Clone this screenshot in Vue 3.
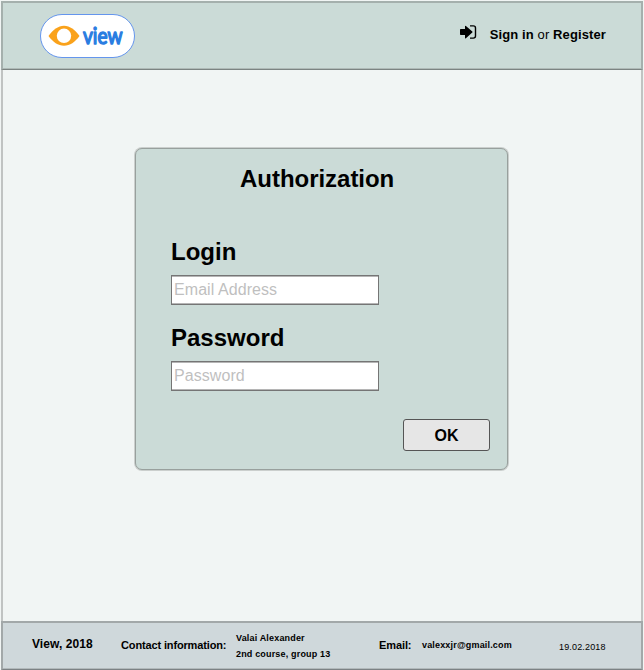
<script setup>
import { ref } from 'vue'

const login = ref('')
const password = ref('')
</script>

<template>
  <div class="page">
    <header class="header">
      <svg class="logo" width="96" height="44" viewBox="0 0 96 44">
        <rect x="0.5" y="0.5" width="94" height="43" rx="21.5" fill="#fff" stroke="#6495ed" />
        <path d="M8.5 22C13 16 18 11.8 24 11.8S35 16 39.5 22C35 28 30 31.8 24 31.8S13 28 8.5 22Z" fill="#faa21b" />
        <circle cx="24" cy="21.8" r="7.2" fill="#fff" />
        <text x="43" y="30.4" textLength="39.5" lengthAdjust="spacingAndGlyphs" class="brand">view</text>
      </svg>
      <div class="account">
        <svg class="enter" width="17" height="15" viewBox="0 0 17 15">
          <path d="M0 4.7Q0 4 .7 4H5V1.4Q5 .2 5.9 1L12.3 6.5Q12.8 7 12.3 7.5L5.9 13.2Q5 13.8 5 12.7V10H.7Q0 10 0 9.3Z" fill="#000" />
          <path d="M10 .9H13.3Q15.5 .9 15.5 3V11Q15.5 13.1 13.3 13.1H10" fill="none" stroke="#000" stroke-width="1.4" />
        </svg>
        <span class="links"><b>Sign in</b> or <b>Register</b></span>
      </div>
    </header>

    <main class="main">
      <form class="card" @submit.prevent>
        <h1>Authorization</h1>
        <label for="login">Login</label>
        <input id="login" v-model="login" type="text" placeholder="Email Address" />
        <label for="password">Password</label>
        <input id="password" v-model="password" type="password" placeholder="Password" />
        <button type="submit">OK</button>
      </form>
    </main>

    <footer class="footer">
      <span class="copy">View, 2018</span>
      <span class="contact">Contact information:</span>
      <div class="author"><span>Valai Alexander</span><span>2nd course, group 13</span></div>
      <span class="email">Email:</span>
      <span class="address">valexxjr@gmail.com</span>
      <span class="date">19.02.2018</span>
    </footer>
  </div>
</template>

<style>
body {
  background: #f1f5f4;
}
</style>

<style scoped>
* {
  box-sizing: border-box;
}
.page {
  width: 644px;
  height: 670px;
  padding: 1px 1px 0;
  display: flex;
  flex-direction: column;
  font-family: "Liberation Sans", Arial, sans-serif;
  color: #000;
  background: #f1f5f4;
}
.header {
  height: 69px;
  flex: none;
  display: flex;
  justify-content: space-between;
  align-items: flex-start;
  padding: 11px 35px 0 37px;
  background: #cbdbd7;
  border: 2px solid #a5b0ad;
  border-bottom: 1px solid #7c8482;
  box-shadow: inset 0 -1px #afbab7;
}
.logo {
  display: block;
}
.brand {
  font: 400 23.5px Lato, sans-serif;
  fill: #2a7de1;
  stroke: #2a7de1;
  stroke-width: 1.5;
  stroke-linejoin: round;
  stroke-linecap: round;
}
.account {
  display: flex;
  padding-top: 11px;
}
.enter {
  margin-right: 13px;
}
.links {
  padding-top: 2px;
  font-size: 13px;
  line-height: 15px;
  letter-spacing: 0.11px;
  white-space: nowrap;
}
.main {
  flex: 1;
  padding: 78px 0 0 132px;
  border-left: 2px solid #c0c3c2;
  border-right: 2px solid #c0c3c2;
}
.card {
  width: 373px;
  height: 322px;
  display: flex;
  flex-direction: column;
  align-items: flex-start;
  padding: 16px 17px 0 35px;
  background: #cbdbd7;
  border: 1px solid #98a09d;
  border-radius: 7px;
  box-shadow: 0 0 0 1px #cbcfcd;
}
h1 {
  margin: 0 0 46px 69px;
  font-size: 24px;
  line-height: 27px;
  letter-spacing: -0.03px;
}
label {
  font-size: 24px;
  font-weight: bold;
  line-height: 27px;
  margin-bottom: 10px;
}
input {
  width: 208px;
  height: 30px;
  margin: 0 0 19px;
  padding: 0 2px;
  border: 1px solid #757575;
  border-radius: 0;
  background: #fff;
  box-shadow: inset 0 1px #b5b5b5, inset 0 -1px #b5b5b5;
  font: 16px "Liberation Sans", Arial, sans-serif;
  letter-spacing: 0.07px;
}
input::placeholder {
  color: #bfbfbf;
  opacity: 1;
}
button {
  align-self: flex-end;
  width: 87px;
  height: 32px;
  margin-top: 9px;
  padding: 1px 0 0;
  border: 1px solid #555;
  border-radius: 3px;
  background: #e6e6e6;
  color: #000;
  font: bold 16px "Liberation Sans", Arial, sans-serif;
}
.footer {
  flex: none;
  height: 49px;
  display: flex;
  align-items: flex-start;
  background: #cfd8db;
  border: 2px solid #a2a8a9;
  border-bottom: 1px solid #7c8284;
  box-shadow: inset 0 -1px #b2b9bb;
  font-weight: bold;
  white-space: nowrap;
}
.copy {
  width: 89px;
  margin: 14px 0 0 29px;
  font-size: 12px;
  line-height: 14px;
  letter-spacing: 0.06px;
}
.contact {
  width: 115px;
  margin-top: 16px;
  font-size: 11px;
  line-height: 13px;
  letter-spacing: -0.14px;
}
.author {
  width: 143px;
  margin-top: 7px;
  display: flex;
  flex-direction: column;
  font-size: 9px;
  line-height: 16px;
  letter-spacing: 0.17px;
}
.email {
  width: 43px;
  margin-top: 16px;
  font-size: 11px;
  line-height: 13px;
  letter-spacing: -0.1px;
}
.address {
  width: 137px;
  margin-top: 16px;
  font-size: 9px;
  line-height: 12px;
  letter-spacing: 0.17px;
}
.date {
  margin-top: 18px;
  font-size: 9px;
  line-height: 12px;
  font-weight: normal;
  letter-spacing: 0.16px;
}
</style>
